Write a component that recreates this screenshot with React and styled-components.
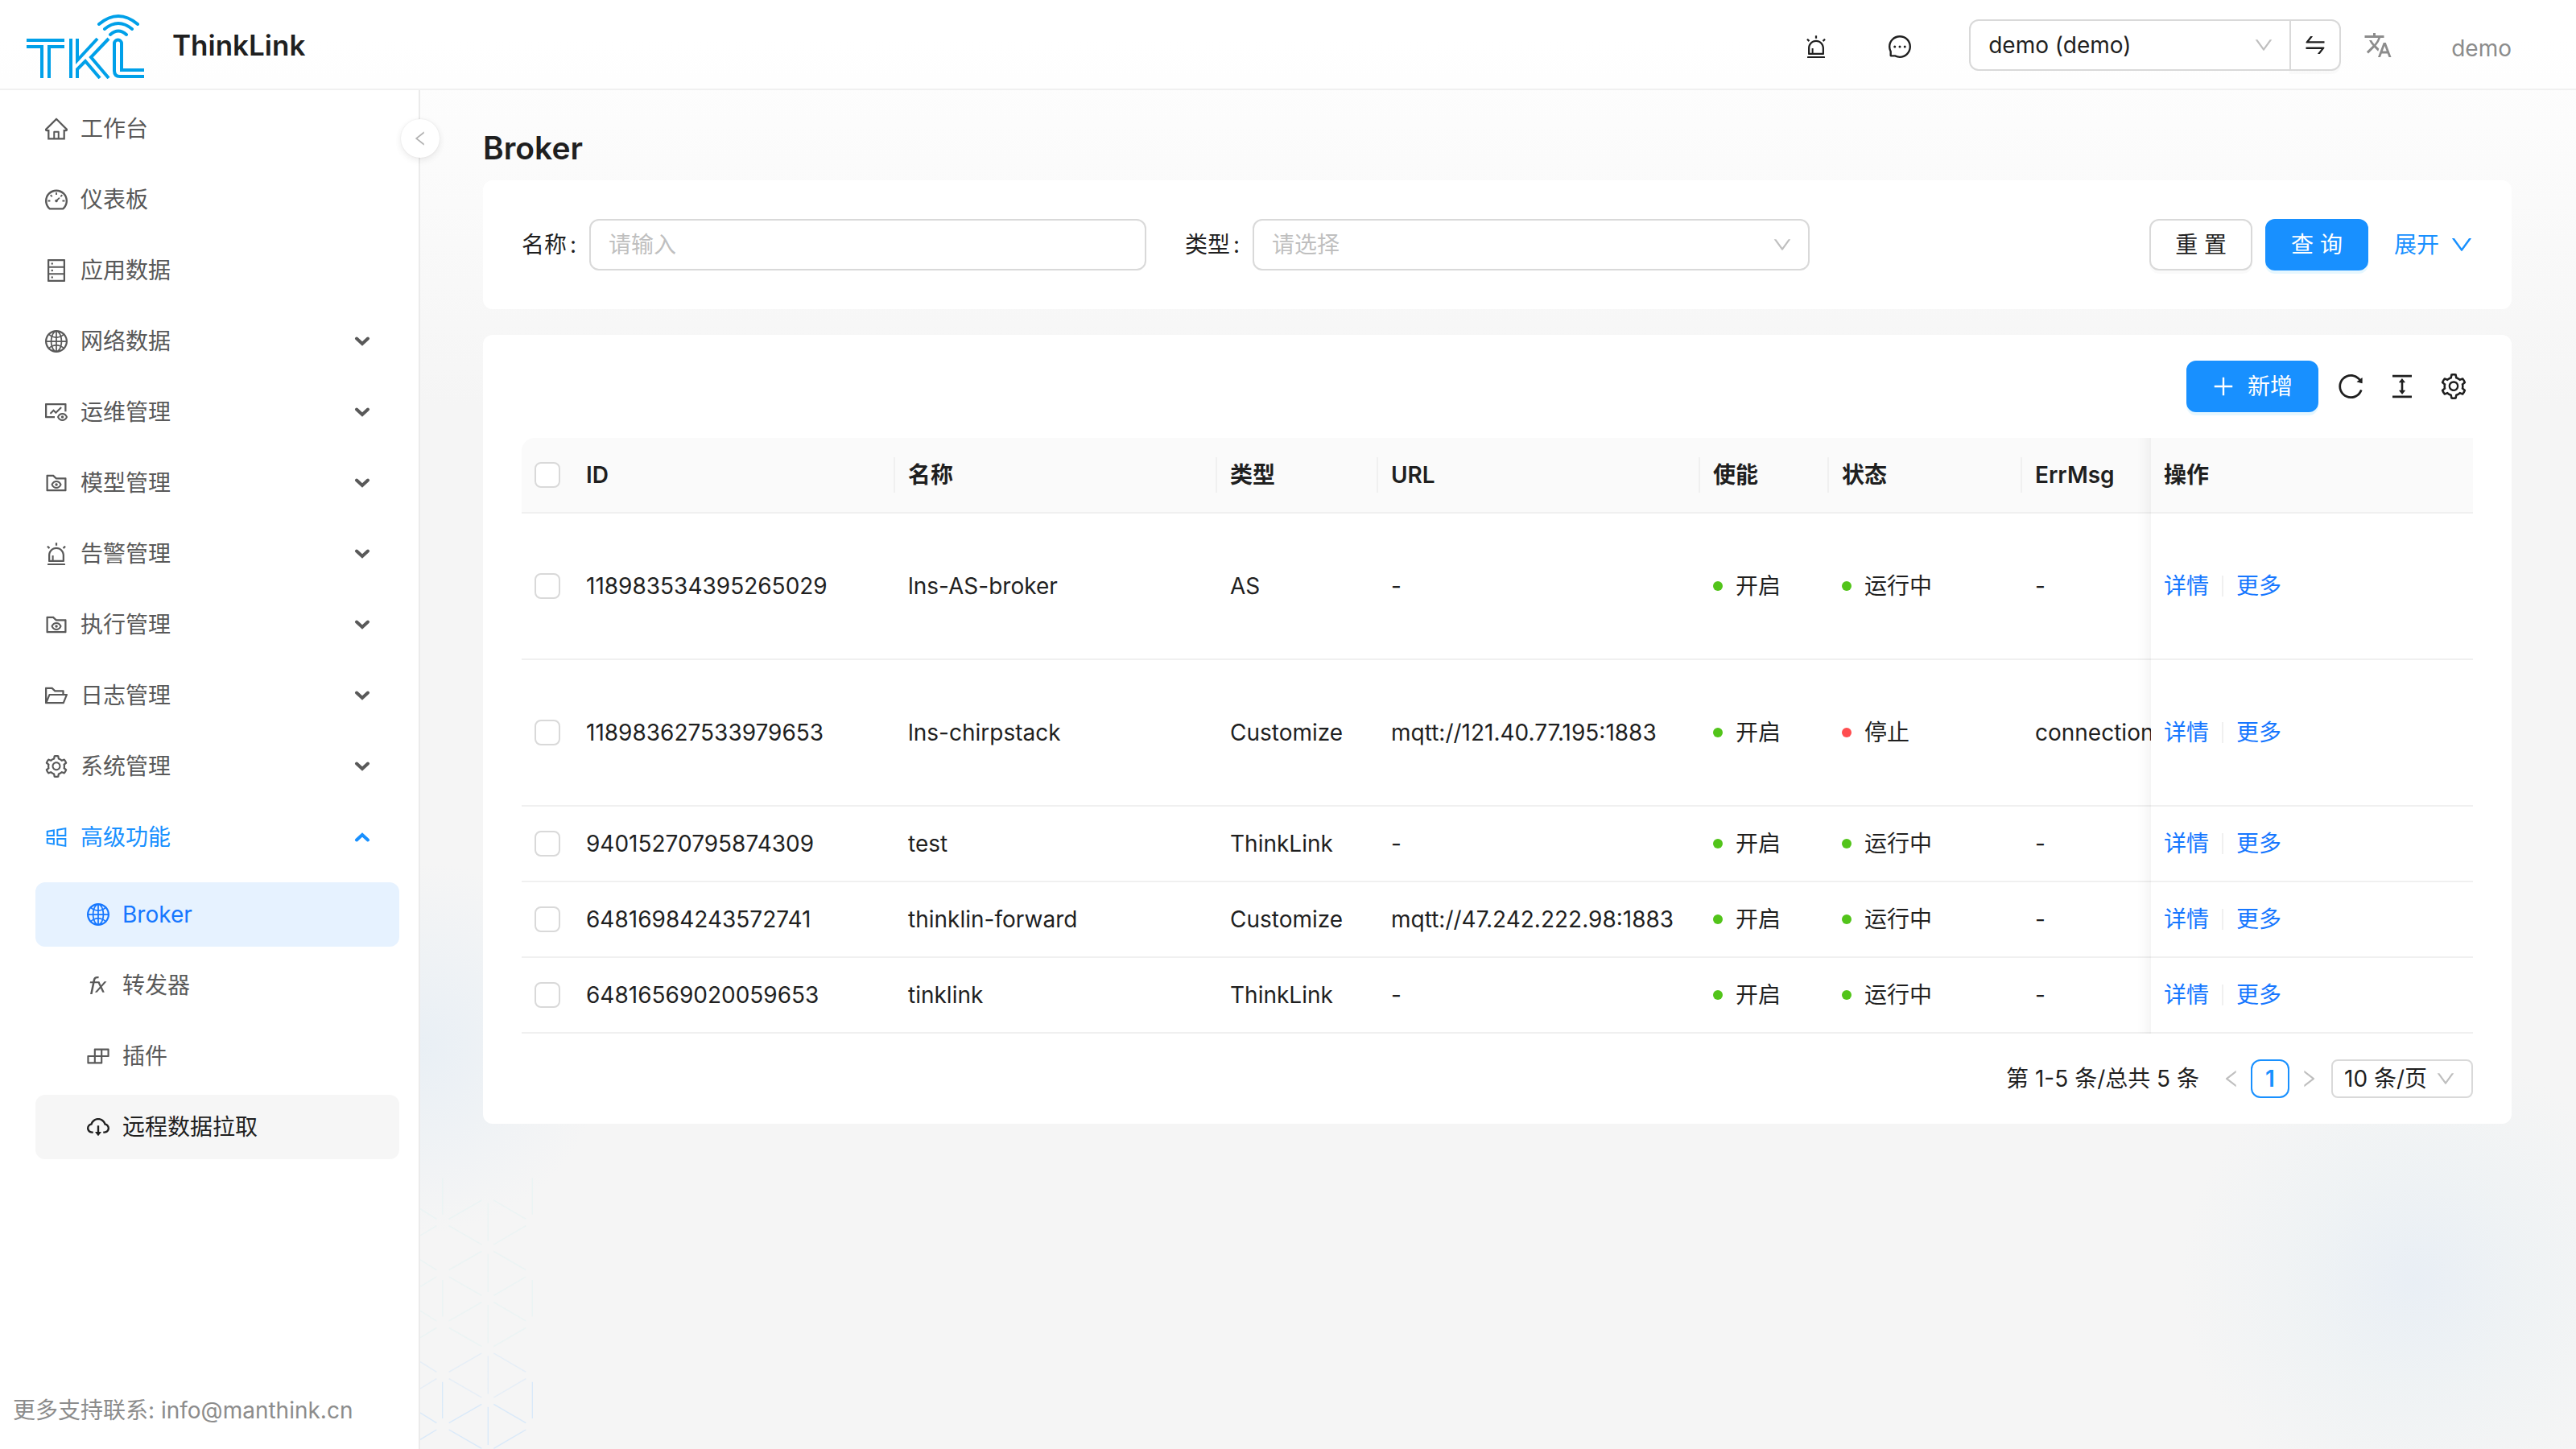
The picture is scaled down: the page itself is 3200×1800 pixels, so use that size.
import styled, { createGlobalStyle } from "styled-components";
import {
  AiOutlineAlert,
  AiOutlineBuild,
  AiOutlineCloudDownload,
  AiOutlineColumnHeight,
  AiOutlineDashboard,
  AiOutlineDatabase,
  AiOutlineDown,
  AiOutlineFolderOpen,
  AiOutlineFolderView,
  AiOutlineFunction,
  AiOutlineFundView,
  AiOutlineGlobal,
  AiOutlineHome,
  AiOutlineLeft,
  AiOutlineMessage,
  AiOutlinePlus,
  AiOutlineReload,
  AiOutlineRight,
  AiOutlineSetting,
  AiOutlineSwap,
  AiOutlineWindows,
} from "react-icons/ai";
import { MdTranslate } from "react-icons/md";

const GlobalStyle = createGlobalStyle`
  *, *::before, *::after {
    box-sizing: border-box;
  }
  body {
    margin: 0;
    color: #1f1f1f;
    font-family: Inter, "Noto Sans CJK SC", sans-serif;
    font-size: 28px;
    line-height: 44px;
  }
  button, input, select {
    font: inherit;
    color: inherit;
  }
  button {
    cursor: pointer;
  }
  a {
    text-decoration: none;
  }
`;

// 页面整体
const Page = styled.div`
  position: relative;
  min-height: 100vh;
  display: flex;
  flex-direction: column;
  background: linear-gradient(#ffffff, #f5f5f5 28%);
`;

// 顶栏
const Header = styled.header`
  display: flex;
  align-items: center;
  height: 112px;
  padding: 2px 80px 0 32px;
  background: rgba(255, 255, 255, 0.6);
  border-bottom: 2px solid #f0f0f0;
`;

const Brand = styled.a`
  display: flex;
  align-items: center;
  gap: 32px;
  margin-right: auto;
  color: #1f1f1f;
`;

const BrandName = styled.h1`
  margin: 0;
  font-size: 35px;
  line-height: 44px;
  font-weight: 600;
`;

const HeaderButton = styled.button`
  display: flex;
  padding: ${(props) => (props.$muted ? 0 : "4px 0 0")};
  margin-right: ${(props) => props.$gap}px;
  border: none;
  background: none;
  font-size: ${(props) => (props.$muted ? 36 : 28)}px;
  color: ${(props) => (props.$muted ? "#8c8c8c" : "#1f1f1f")};
`;

const Tenant = styled.div`
  display: flex;
  margin-right: 28px;
`;

const SwapButton = styled.button`
  display: flex;
  align-items: center;
  justify-content: center;
  width: 64px;
  height: 64px;
  margin-left: -2px;
  border: 2px solid #d9d9d9;
  border-radius: 0 12px 12px 0;
  background: #ffffff;
  box-shadow: 0 4px 0 rgba(0, 0, 0, 0.02);
`;

const UserName = styled.span`
  padding-top: 8px;
  color: #8c8c8c;
`;

// 下拉选择框
const SelectBox = styled.div`
  position: relative;
  display: flex;
  flex: ${(props) => props.$flex || "none"};
  width: ${(props) => props.$width || "auto"};

  select {
    appearance: none;
    width: 100%;
    height: ${(props) => (props.$small ? 48 : 64)}px;
    padding: ${(props) => (props.$small ? "0 48px 0 14px" : "0 64px 0 22px")};
    border: 2px solid #d9d9d9;
    border-radius: ${(props) => props.$radius || "12px"};
    background: #ffffff;
    color: ${(props) => (props.$placeholder ? "#bfbfbf" : "#1f1f1f")};
  }

  svg {
    position: absolute;
    top: 50%;
    right: 22px;
    margin-top: -12px;
    font-size: 24px;
    color: #bfbfbf;
    pointer-events: none;
  }
`;

const Body = styled.div`
  flex: 1;
  display: flex;
`;

// 侧边菜单
const Sider = styled.aside`
  position: relative;
  z-index: 1;
  flex: none;
  display: flex;
  flex-direction: column;
  justify-content: space-between;
  width: 522px;
  background: #ffffff;
  border-right: 2px solid #ebebeb;
`;

const Menu = styled.ul`
  display: flex;
  flex-direction: column;
  gap: 8px;
  margin: 0;
  padding: 8px 24px 0 44px;
  list-style: none;
`;

const SubMenu = styled(Menu)`
  padding: 16px 0 0;
`;

const menuColors = {
  open: "#1890ff",
  selected: "#1677ff",
  hover: "#1f1f1f",
};

const menuBackgrounds = {
  selected: "#e6f2ff",
  hover: "#f6f6f6",
};

const MenuLink = styled.a`
  display: flex;
  align-items: center;
  gap: 16px;
  height: 80px;
  padding: 0 36px 0 ${(props) => (props.$nested ? 64 : 12)}px;
  border-radius: 12px;
  color: ${(props) => menuColors[props.$state] || "#595959"};
  background: ${(props) => menuBackgrounds[props.$state] || "transparent"};
`;

const MenuArrow = styled.svg`
  width: 20px;
  height: 12px;
  margin-left: auto;
  transform: ${(props) => (props.$up ? "rotate(180deg)" : "none")};
`;

const CollapseButton = styled.button`
  position: absolute;
  top: 36px;
  right: -26px;
  display: flex;
  align-items: center;
  justify-content: center;
  width: 48px;
  height: 48px;
  padding: 0;
  border: none;
  border-radius: 50%;
  background: #ffffff;
  color: #b3b3b3;
  font-size: 20px;
  box-shadow: 0 4px 16px -4px rgba(0, 0, 0, 0.05),
    0 2px 8px 0 rgba(25, 15, 15, 0.07), 0 0 2px 0 rgba(0, 0, 0, 0.08);
`;

const Support = styled.p`
  margin: 0;
  padding: 0 16px 26px;
  color: #8c8c8c;
`;

// 内容区
const Content = styled.main`
  position: relative;
  flex: 1;
  min-width: 0;
  padding: 50px 80px 0 78px;
  background: radial-gradient(
      circle at calc(100% - 200px) calc(100% - 210px),
      rgba(228, 236, 245, 0.7),
      rgba(228, 238, 243, 0.35) 140px,
      rgba(228, 238, 243, 0) 290px
    ),
    radial-gradient(circle at 0 1190px, rgba(228, 237, 245, 0.7), rgba(228, 237, 245, 0) 230px);
`;

const PageTitle = styled.h2`
  margin: 0 0 18px;
  font-size: 39px;
  line-height: 44px;
  font-weight: 600;
`;

const Card = styled.section`
  position: relative;
  padding: ${(props) => props.$padding};
  margin-bottom: 32px;
  border-radius: 12px;
  background: #ffffff;
`;

const SearchForm = styled.form`
  display: grid;
  grid-template-columns: repeat(3, 1fr);
  gap: 48px;
`;

const Field = styled.div`
  display: flex;
  align-items: center;

  label {
    display: flex;
    gap: 4px;
    width: 84px;
  }
`;

const TextInput = styled.input`
  flex: 1;
  min-width: 0;
  height: 64px;
  padding: 0 22px;
  border: 2px solid #d9d9d9;
  border-radius: 12px;
  background: #ffffff;

  &::placeholder {
    color: #bfbfbf;
    opacity: 1;
  }
`;

const FormActions = styled.div`
  display: flex;
  align-items: center;
  justify-content: flex-end;
  gap: 16px;
`;

const Button = styled.button`
  display: flex;
  align-items: center;
  justify-content: center;
  gap: 16px;
  height: 64px;
  padding: 0 30px;
  border: 2px solid ${(props) => (props.$primary ? "#1890ff" : "#d9d9d9")};
  border-radius: 12px;
  background: ${(props) => (props.$primary ? "#1890ff" : "#ffffff")};
  color: ${(props) => (props.$primary ? "#ffffff" : "#1f1f1f")};
  box-shadow: 0 4px 0
    ${(props) => (props.$primary ? "#e6f7ff" : "rgba(0, 0, 0, 0.02)")};
`;

const ExpandLink = styled.a`
  display: flex;
  align-items: center;
  gap: 14px;
  margin-left: 16px;
  color: #1890ff;
`;

const Toolbar = styled.div`
  display: flex;
  align-items: center;
  justify-content: flex-end;
  gap: 16px;
  margin-bottom: 32px;
`;

const ToolButton = styled.button`
  display: flex;
  padding: 8px;
  border: none;
  background: none;
  font-size: 32px;
`;

// 表格
const TableScroll = styled.div`
  overflow: hidden;
  border-radius: 16px 0 0 0;
`;

const Table = styled.table`
  width: 100%;
  table-layout: fixed;
  border-collapse: separate;
  border-spacing: 0;
  text-align: left;
`;

const HeadCell = styled.th`
  position: relative;
  height: 94px;
  padding: 0 16px;
  border-bottom: 2px solid #f0f0f0;
  background: #fafafa;
  font-weight: 600;
  white-space: nowrap;

  &:not(:nth-child(-n + 2)):not(:last-child)::before {
    content: "";
    position: absolute;
    top: 24px;
    left: -2px;
    width: 2px;
    height: 44px;
    background: #f0f0f0;
  }
`;

const Cell = styled.td`
  height: ${(props) => (props.$tall ? 182 : 94)}px;
  padding: 0 16px;
  border-bottom: 2px solid #f0f0f0;
  white-space: nowrap;
`;

// 固定在右侧的操作列，左边带阴影
const fixedShadow = `
  position: sticky;
  right: 0;

  &::after {
    content: "";
    position: absolute;
    top: 0;
    bottom: -2px;
    left: -60px;
    width: 60px;
    box-shadow: inset -20px 0 16px -16px rgba(5, 5, 5, 0.06);
    pointer-events: none;
  }
`;

const FixedHeadCell = styled(HeadCell)`
  ${fixedShadow}
`;

const FixedCell = styled(Cell)`
  ${fixedShadow}
  background: #ffffff;
`;

const Checkbox = styled.input`
  appearance: none;
  display: block;
  width: 32px;
  height: 32px;
  margin: 0;
  border: 2px solid #d9d9d9;
  border-radius: 8px;
  background: #ffffff;
`;

const Status = styled.span`
  display: flex;
  align-items: center;
  gap: 16px;

  &::before {
    content: "";
    width: 12px;
    height: 12px;
    border-radius: 50%;
    background: ${(props) => props.$color};
  }
`;

const RowActions = styled.div`
  display: flex;
  align-items: center;
  gap: 16px;

  a {
    color: #1677ff;
  }

  a + a::before {
    content: "";
    display: inline-block;
    width: 2px;
    height: 26px;
    margin-right: 16px;
    vertical-align: -3px;
    background: #f0f0f0;
  }
`;

const Pagination = styled.nav`
  display: flex;
  align-items: center;
  justify-content: flex-end;
  margin-top: 32px;
`;

const PageTotal = styled.span`
  margin-right: 16px;
`;

const PageButton = styled.button`
  display: flex;
  align-items: center;
  justify-content: center;
  width: 48px;
  height: 48px;
  padding: 0;
  border: 2px solid ${(props) => (props.$active ? "#1890ff" : "transparent")};
  border-radius: 12px;
  background: ${(props) => (props.$active ? "#ffffff" : "transparent")};
  color: ${(props) => (props.$active ? "#1890ff" : "#bfbfbf")};
  font-weight: ${(props) => (props.$active ? 600 : 400)};

  svg {
    font-size: 24px;
  }
`;

const PageSize = styled(SelectBox)`
  margin-left: 4px;
`;

// 左下角的六边形底纹
const PatternSvg = styled.svg`
  position: absolute;
  left: 0;
  bottom: 0;
  width: 160px;
  height: 400px;
  pointer-events: none;
`;

const menuItems = [
  { label: "工作台", icon: AiOutlineHome },
  { label: "仪表板", icon: AiOutlineDashboard },
  { label: "应用数据", icon: AiOutlineDatabase },
  { label: "网络数据", icon: AiOutlineGlobal, group: true },
  { label: "运维管理", icon: AiOutlineFundView, group: true },
  { label: "模型管理", icon: AiOutlineFolderView, group: true },
  { label: "告警管理", icon: AiOutlineAlert, group: true },
  { label: "执行管理", icon: AiOutlineFolderView, group: true },
  { label: "日志管理", icon: AiOutlineFolderOpen, group: true },
  { label: "系统管理", icon: AiOutlineSetting, group: true },
  {
    label: "高级功能",
    icon: AiOutlineWindows,
    group: true,
    state: "open",
    children: [
      { label: "Broker", icon: AiOutlineGlobal, state: "selected" },
      { label: "转发器", icon: AiOutlineFunction },
      { label: "插件", icon: AiOutlineBuild },
      { label: "远程数据拉取", icon: AiOutlineCloudDownload, state: "hover" },
    ],
  },
];

const rows = [
  { id: "118983534395265029", name: "lns-AS-broker", type: "AS", url: "-", running: true, err: "-", tall: true },
  {
    id: "118983627533979653",
    name: "lns-chirpstack",
    type: "Customize",
    url: "mqtt://121.40.77.195:1883",
    running: false,
    err: "connection",
    tall: true,
  },
  { id: "94015270795874309", name: "test", type: "ThinkLink", url: "-", running: true, err: "-" },
  {
    id: "64816984243572741",
    name: "thinklin-forward",
    type: "Customize",
    url: "mqtt://47.242.222.98:1883",
    running: true,
    err: "-",
  },
  { id: "64816569020059653", name: "tinklink", type: "ThinkLink", url: "-", running: true, err: "-" },
];

// 去掉图标四周的留白，和 antd 的显示大小一致
function AntIcon({ icon: Icon }) {
  return <Icon viewBox="64 64 896 896" />;
}

function Logo() {
  return (
    <svg width="150" height="84" viewBox="32 14 150 84" fill="none" stroke="#00a0e9" strokeWidth="4">
      <path d="M33 50H80M33 58H52V97M80 58H61V97" />
      <path d="M88 48V97M96 97V86L106 76L124 97M96 48V75L121 48M135 48L113 71L135 97" />
      <path d="M179 87H151V54A4.5 4.5 0 0 0 142 54V88Q142 95 149 95H179" />
      <path d="M137 43Q147 34 157 43M130 36Q147 22 164 36M123 30Q147 10 171 30" strokeLinecap="round" />
    </svg>
  );
}

function Pattern() {
  return (
    <PatternSvg viewBox="36 0 480 1200" fill="none" strokeWidth="4">
      {[0, 1, 2, 3, 4].map((level) => {
        const y = 1115 - level * 190;
        const lines = [
          `M36 ${y - 50}L97 ${y - 12}M36 ${y + 50}L97 ${y + 13}`,
          `M143 ${y - 12}L265 ${y - 82}M143 ${y + 13}L265 ${y + 83}`,
          `M310 ${y - 82}L430 ${y - 12}M310 ${y + 83}L430 ${y + 13}`,
          `M289 ${y - 72}V${y + 70}`,
          level % 2 === 0 ? `M119 ${y - 165}V${y - 29}M454 ${y - 165}V${y - 29}` : "",
        ];
        return (
          <path
            key={level}
            d={lines.join("")}
            stroke={level < 2 ? "#d6e8fa" : "#e2f3f3"}
            opacity={level === 0 ? 0.9 : 0.5}
          />
        );
      })}
    </PatternSvg>
  );
}

function MenuItem({ item, nested }) {
  return (
    <li>
      <MenuLink href="#" $nested={nested} $state={item.state}>
        <AntIcon icon={item.icon} />
        <span>{item.label}</span>
        {item.group && (
          <MenuArrow viewBox="0 0 20 12" $up={item.state === "open"}>
            <path d="M3 2.5L10 9L17 2.5" fill="none" stroke="currentColor" strokeWidth="4" strokeLinecap="round" />
          </MenuArrow>
        )}
      </MenuLink>
      {item.children && (
        <SubMenu>
          {item.children.map((child) => (
            <MenuItem key={child.label} item={child} nested />
          ))}
        </SubMenu>
      )}
    </li>
  );
}

function BrokerTable() {
  return (
    <TableScroll>
      <Table>
        <colgroup>
          <col width="64" />
          <col width="400" />
          <col width="400" />
          <col width="200" />
          <col width="400" />
          <col width="160" />
          <col width="240" />
          <col />
          <col width="400" />
        </colgroup>
        <thead>
          <tr>
            <HeadCell>
              <Checkbox type="checkbox" aria-label="全选" />
            </HeadCell>
            <HeadCell>ID</HeadCell>
            <HeadCell>名称</HeadCell>
            <HeadCell>类型</HeadCell>
            <HeadCell>URL</HeadCell>
            <HeadCell>使能</HeadCell>
            <HeadCell>状态</HeadCell>
            <HeadCell>ErrMsg</HeadCell>
            <FixedHeadCell>操作</FixedHeadCell>
          </tr>
        </thead>
        <tbody>
          {rows.map((row) => (
            <tr key={row.id}>
              <Cell $tall={row.tall}>
                <Checkbox type="checkbox" aria-label={row.name} />
              </Cell>
              <Cell>{row.id}</Cell>
              <Cell>{row.name}</Cell>
              <Cell>{row.type}</Cell>
              <Cell>{row.url}</Cell>
              <Cell>
                <Status $color="#52c41a">开启</Status>
              </Cell>
              <Cell>
                <Status $color={row.running ? "#52c41a" : "#ff4d4f"}>{row.running ? "运行中" : "停止"}</Status>
              </Cell>
              <Cell>{row.err}</Cell>
              <FixedCell>
                <RowActions>
                  <a href="#">详情</a>
                  <a href="#">更多</a>
                </RowActions>
              </FixedCell>
            </tr>
          ))}
        </tbody>
      </Table>
    </TableScroll>
  );
}

function App() {
  return (
    <Page>
      <GlobalStyle />
      <Header>
        <Brand href="#">
          <Logo />
          <BrandName>ThinkLink</BrandName>
        </Brand>
        <HeaderButton $gap={76} aria-label="告警">
          <AntIcon icon={AiOutlineAlert} />
        </HeaderButton>
        <HeaderButton $gap={72} aria-label="消息">
          <AntIcon icon={AiOutlineMessage} />
        </HeaderButton>
        <Tenant>
          <SelectBox $width="400px" $radius="12px 0 0 12px">
            <select aria-label="租户" defaultValue="demo">
              <option value="demo">demo (demo)</option>
            </select>
            <AntIcon icon={AiOutlineDown} />
          </SelectBox>
          <SwapButton aria-label="切换">
            <AntIcon icon={AiOutlineSwap} />
          </SwapButton>
        </Tenant>
        <HeaderButton $gap={73} $muted aria-label="语言">
          <MdTranslate />
        </HeaderButton>
        <UserName>demo</UserName>
      </Header>
      <Body>
        <Sider>
          <Menu>
            {menuItems.map((item) => (
              <MenuItem key={item.label} item={item} />
            ))}
          </Menu>
          <Support>更多支持联系: info@manthink.cn</Support>
          <CollapseButton aria-label="收起菜单">
            <AntIcon icon={AiOutlineLeft} />
          </CollapseButton>
        </Sider>
        <Content>
          <Pattern />
          <PageTitle>Broker</PageTitle>
          <Card $padding="48px">
            <SearchForm>
              <Field>
                <label htmlFor="name">
                  名称<span>:</span>
                </label>
                <TextInput id="name" placeholder="请输入" />
              </Field>
              <Field>
                <label htmlFor="type">
                  类型<span>:</span>
                </label>
                <SelectBox $flex="1" $placeholder>
                  <select id="type" defaultValue="">
                    <option value="">请选择</option>
                  </select>
                  <AntIcon icon={AiOutlineDown} />
                </SelectBox>
              </Field>
              <FormActions>
                <Button type="reset">重 置</Button>
                <Button type="button" $primary>
                  查 询
                </Button>
                <ExpandLink href="#">
                  展开
                  <AntIcon icon={AiOutlineDown} />
                </ExpandLink>
              </FormActions>
            </SearchForm>
          </Card>
          <Card $padding="32px 48px">
            <Toolbar>
              <Button $primary>
                <AntIcon icon={AiOutlinePlus} />
                新增
              </Button>
              <ToolButton aria-label="刷新">
                <AntIcon icon={AiOutlineReload} />
              </ToolButton>
              <ToolButton aria-label="密度">
                <AntIcon icon={AiOutlineColumnHeight} />
              </ToolButton>
              <ToolButton aria-label="列设置">
                <AntIcon icon={AiOutlineSetting} />
              </ToolButton>
            </Toolbar>
            <BrokerTable />
            <Pagination>
              <PageTotal>第 1-5 条/总共 5 条</PageTotal>
              <PageButton aria-label="上一页">
                <AntIcon icon={AiOutlineLeft} />
              </PageButton>
              <PageButton $active>1</PageButton>
              <PageButton aria-label="下一页">
                <AntIcon icon={AiOutlineRight} />
              </PageButton>
              <PageSize $small $width="176px" $radius="8px">
                <select aria-label="每页条数" defaultValue="10">
                  <option value="10">10 条/页</option>
                </select>
                <AntIcon icon={AiOutlineDown} />
              </PageSize>
            </Pagination>
          </Card>
        </Content>
      </Body>
    </Page>
  );
}

export default App;
